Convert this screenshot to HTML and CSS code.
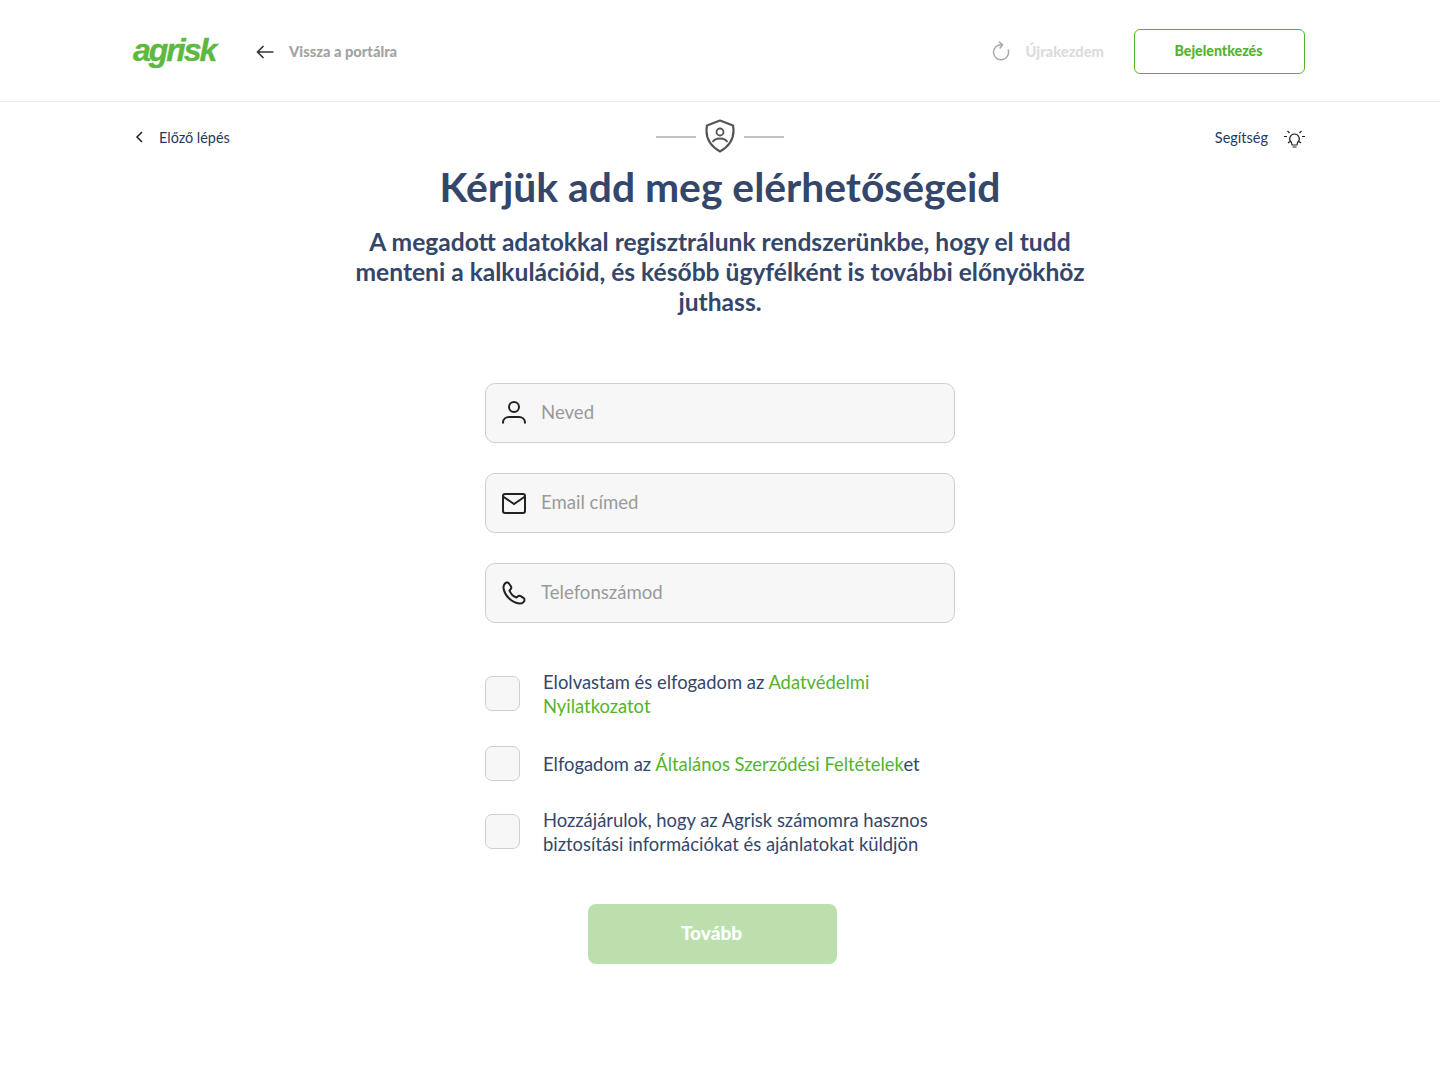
FILE: index.html
```html
<!DOCTYPE html>
<html lang="hu">
<head>
    <meta charset="UTF-8">
    <meta name="viewport" content="width=device-width, initial-scale=1.0">
    <title>Agrisk</title>
    <link rel="stylesheet" href="styles.css">
</head>
<body>
    <header class="topbar">
        <div class="topbar-left">
            <a class="logo">agrisk</a>
            <a class="back-link">
                <svg width="18" height="14" viewBox="0 0 18 14" fill="none" stroke="#333" stroke-width="1.6"><path d="M17.500 7H1.500M7.500 1 1.500 7l6 6"/></svg>
                <span>Vissza a portálra</span>
            </a>
        </div>
        <div class="topbar-right">
            <a class="restart-link">
                <svg class="restart-icon" width="18" height="20" viewBox="0 0 18 20" fill="none" stroke="#a9a9a9" stroke-width="1.5"><path d="M9.500 3.800A7.500 7.500 0 1 0 16 8.500M7 .6l3.500 3.200L7.800 7.500"/></svg>
                <span>Újrakezdem</span>
            </a>
            <a class="login-btn"><span>Bejelentkezés</span></a>
        </div>
    </header>

    <main class="page">
        <div class="step-row">
            <a class="prev-link">
                <svg width="8" height="12" viewBox="0 0 8 12" fill="none" stroke="#222" stroke-width="1.5"><path d="M7 1 2 6l5 5"/></svg>
                <span>Előző lépés</span>
            </a>
            <div class="step-mark">
                <span class="step-line"></span>
                <svg class="shield-icon" width="32" height="34" viewBox="0 0 32 34" fill="none" stroke="#555" stroke-width="2.2"><path d="M16 1.500 29 6.500c1.500 8 1 18-13 26C2 24.500 1.500 14.500 3 6.500z" stroke-linejoin="round"/><circle cx="16" cy="13" r="3.500" stroke-width="1.800"/><path d="M8.500 23c2-3 4.500-3.500 7.500-3.500s5.500.5 7.500 3.500" stroke-width="1.800"/></svg>
                <span class="step-line"></span>
            </div>
            <a class="help-link">
                <span>Segítség</span>
                <svg class="help-icon" width="21" height="18" viewBox="0 0 21 18" fill="none" stroke="#222" stroke-width="1.200"><path d="M7.500 12.500c-3.500-3-1.500-8.500 3-8.500s6.500 5.500 3 8.500l-.5 2.500H8zM8.500 17h4M0 6.500h3M18 6.500h3M3.500 1l2 2M17.500 1l-2 2M4 13l2-1.500M17 13l-2-1.500"/></svg>
            </a>
        </div>

        <h1 class="title">Kérjük add meg elérhetőségeid</h1>
        <p class="lead">A megadott adatokkal regisztrálunk rendszerünkbe, hogy el tudd menteni a kalkulációid, és később ügyfélként is további előnyökhöz juthass.</p>

        <form class="contact-form">
            <label class="field">
                <svg class="field-icon" width="26" height="26" viewBox="0 0 26 26" fill="none" stroke="#222" stroke-width="2"><circle cx="13" cy="7" r="5"/><path d="M2 23.500v-1c0-3.500 3-5.500 6-5.500h10c3 0 6 2 6 5.500v1"/></svg>
                <input class="field-input" type="text" placeholder="Neved">
            </label>
            <label class="field">
                <svg class="field-icon" width="26" height="26" viewBox="0 0 26 26" fill="none" stroke="#222" stroke-width="2"><rect x="2" y="4" width="22" height="19" rx="2"/><path d="M2 6.500 13 14 24 6.500"/></svg>
                <input class="field-input" type="text" placeholder="Email címed">
            </label>
            <label class="field">
                <svg class="field-icon" width="26" height="26" viewBox="0 0 26 26" fill="none" stroke="#222" stroke-width="2" stroke-linejoin="round"><path d="M4 3.500c1-1 3-1.500 4 0l2 3c.5 1 .3 2-.5 2.800L8.500 10.500c1 3 4 6 7 7l1.200-1c.8-.8 2-1 3-.4l3 2c1.200 1 1 2.800 0 3.800-1 1.200-2.500 1.800-4 1.600C10.500 22.500 3.500 15.500 2.500 8c-.2-1.500.5-3.300 1.500-4.500z"/></svg>
                <input class="field-input" type="text" placeholder="Telefonszámod">
            </label>

            <div class="checks">
                <label class="check-row">
                    <span class="checkbox"></span>
                    <span class="check-text">Elolvastam és elfogadom az <a class="green">Adatvédelmi Nyilatkozatot</a></span>
                </label>
                <label class="check-row">
                    <span class="checkbox"></span>
                    <span class="check-text">Elfogadom az <a class="green">Általános Szerződési Feltételek</a>et</span>
                </label>
                <label class="check-row check-row-last">
                    <span class="checkbox"></span>
                    <span class="check-text">Hozzájárulok, hogy az Agrisk számomra hasznos biztosítási információkat és ajánlatokat küldjön</span>
                </label>
            </div>

            <button class="next-btn" type="button">Tovább</button>
        </form>
    </main>
</body>
</html>
```

FILE: styles.css
```css
* {
    box-sizing: border-box;
}

body {
    margin: 0;
    background-color: #fff;
    font-family: Lato, "Noto Sans", sans-serif;
    color: #34466a;
}

.topbar {
    height: 102px;
    padding: 29px 135px 27px 133px;
    display: flex;
    justify-content: space-between;
    align-items: center;
    border-bottom: 1px solid #ececec;
}

.topbar-left,
.topbar-right,
.back-link,
.restart-link,
.prev-link,
.help-link {
    display: flex;
    align-items: center;
}

.logo {
    width: 123px;
    padding-bottom: 3px;
    font-family: "Liberation Sans", sans-serif;
    font-size: 32px;
    font-weight: 700;
    font-style: italic;
    letter-spacing: -2px;
    -webkit-text-stroke: 0.4px #5cb83f;
    color: #5cb83f;
}

.back-link {
    gap: 15px;
    font-size: 14.7px;
    font-weight: 900;
    color: #a3a3a3;
}

.back-link span,
.restart-link span,
.login-btn span {
    padding-bottom: 2px;
}

.restart-link {
    gap: 15px;
    margin-right: 30px;
    font-size: 14.7px;
    font-weight: 900;
    color: #dcdcdc;
}

.restart-icon {
    margin: 0 1px 2px 0;
}

.login-btn {
    width: 171px;
    height: 45px;
    padding-right: 2px;
    display: flex;
    align-items: center;
    justify-content: center;
    border: 1px solid #54b32e;
    border-radius: 6px;
    font-size: 14.2px;
    font-weight: 900;
    color: #54b32e;
}

.page {
    padding: 16px 135px 0;
}

.step-row {
    display: grid;
    grid-template-columns: 1fr auto 1fr;
    align-items: center;
    height: 38px;
}

.prev-link {
    gap: 16px;
    font-size: 14.4px;
    color: #26395f;
}

.step-mark {
    display: flex;
    align-items: center;
    gap: 8px;
}

.shield-icon {
    margin-bottom: 3px;
}

.step-line {
    width: 40px;
    height: 2px;
    background-color: #c4c4c4;
}

.help-link {
    justify-content: flex-end;
    gap: 16px;
    font-size: 14.5px;
    color: #26395f;
}

.help-icon {
    margin-top: 3px;
}

.title {
    margin: 5px 0 0;
    font-size: 40.8px;
    line-height: 52px;
    font-weight: 700;
    text-align: center;
    color: #34466a;
}

.lead {
    width: 760px;
    margin: 14px auto 0;
    font-size: 24.6px;
    line-height: 30px;
    font-weight: 700;
    text-align: center;
    color: #34466a;
}

.contact-form {
    width: 470px;
    margin: 66px auto 0;
}

.field {
    height: 60px;
    margin-bottom: 30px;
    padding-left: 15px;
    display: flex;
    align-items: center;
    gap: 14px;
    background-color: #f7f7f7;
    border: 1px solid #cfcfcf;
    border-radius: 10px;
}

.field-input {
    flex: 1;
    min-width: 0;
    height: 100%;
    padding: 0 0 2px;
    border: 0;
    outline: 0;
    background: transparent;
    font-family: inherit;
    font-size: 18.6px;
}

.field-input::placeholder {
    color: #9a9a9a;
}

.checks {
    margin-top: 47px;
    display: flex;
    flex-direction: column;
    gap: 28px;
}

.check-row {
    display: flex;
    align-items: center;
    gap: 23px;
}

.check-row-last {
    margin-top: -2px;
}

.checkbox {
    flex: none;
    width: 35px;
    height: 35px;
    margin-bottom: 1px;
    background-color: #f7f7f7;
    border: 1px solid #cfcfcf;
    border-radius: 7px;
}

.check-text {
    font-size: 18.4px;
    line-height: 24px;
    color: #34466a;
}

.green {
    color: #54b32e;
}

.next-btn {
    display: block;
    width: 249px;
    height: 60px;
    margin: 48px 0 0 103px;
    padding: 0 2px 4px 0;
    border: 0;
    border-radius: 8px;
    background-color: #bcdfae;
    font-family: inherit;
    font-size: 19px;
    font-weight: 900;
    color: #fff;
}
```
